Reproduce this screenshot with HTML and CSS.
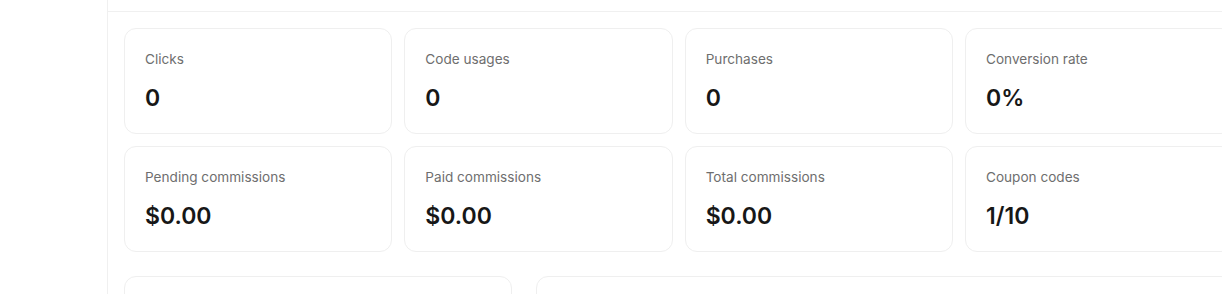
FILE: index.html
```html
<!DOCTYPE html>
<html>
<head>
<meta charset="utf-8">
<link rel="stylesheet" href="styles.css">
</head>
<body>
<div class="layout">
  <aside class="sidebar"></aside>
  <main class="main">
    <div class="topbar"></div>
    <div class="content">
      <div class="stats">
        <div class="card"><div class="label">Clicks</div><div class="value">0</div></div>
        <div class="card"><div class="label">Code usages</div><div class="value">0</div></div>
        <div class="card"><div class="label">Purchases</div><div class="value">0</div></div>
        <div class="card"><div class="label">Conversion rate</div><div class="value">0%</div></div>
        <div class="card"><div class="label">Pending commissions</div><div class="value">$0.00</div></div>
        <div class="card"><div class="label">Paid commissions</div><div class="value">$0.00</div></div>
        <div class="card"><div class="label">Total commissions</div><div class="value">$0.00</div></div>
        <div class="card"><div class="label">Coupon codes</div><div class="value">1/10</div></div>
      </div>
      <div class="panels">
        <div class="panel"></div>
        <div class="panel"></div>
      </div>
    </div>
  </main>
</div>
</body>
</html>
```
FILE: styles.css
```css
html, body {
  margin: 0;
  padding: 0;
  background: #fff;
  overflow: hidden;
  font-family: Inter, "Noto Sans", sans-serif;
}
.layout {
  display: flex;
  width: 1240px;
  height: 294px;
  overflow: hidden;
}
.sidebar {
  width: 107px;
  flex: none;
  border-right: 1px solid #f0f0f0;
}
.main {
  flex: none;
  width: 1132px;
}
.topbar {
  height: 11px;
  border-bottom: 1px solid #f0f0f0;
}
.content {
  padding: 16px 0 0 16px;
}
.stats {
  display: grid;
  width: 1109.33px;
  grid-template-columns: repeat(4, 1fr);
  gap: 12px;
}
.card {
  border: 1px solid #efefef;
  border-radius: 12px;
  padding: 20px 20px 18px;
  height: 66px;
}
.label {
  font-size: 13.6px;
  line-height: 20px;
  color: #6e6e6e;
}
.value {
  margin-top: 14px;
  font-size: 23px;
  line-height: 30px;
  font-weight: 600;
  color: #171717;
}
.panels {
  display: grid;
  width: 1109.33px;
  grid-template-columns: 388px 1fr;
  gap: 24px;
  margin-top: 24px;
}
.panel {
  border: 1px solid #efefef;
  border-radius: 12px;
  height: 100px;
}
```
